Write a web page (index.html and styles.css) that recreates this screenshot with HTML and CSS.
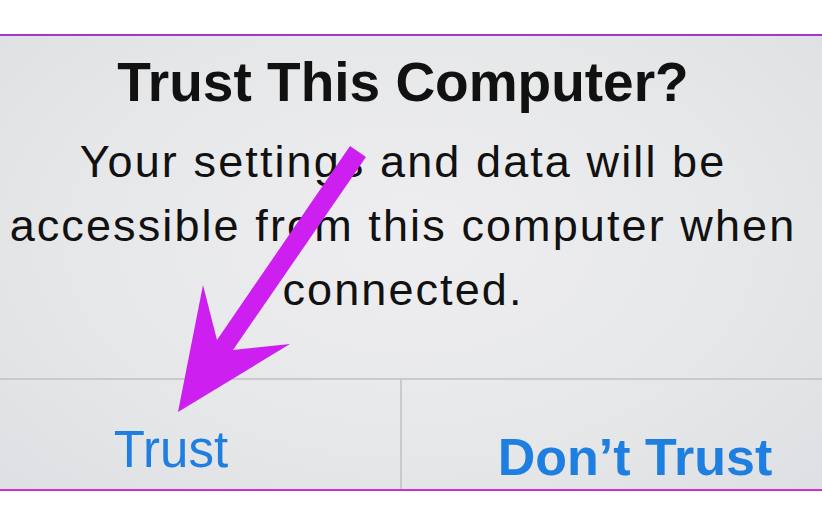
FILE: index.html
```html
<!DOCTYPE html>
<html lang="en">
<head>
<meta charset="utf-8">
<title>Trust This Computer?</title>
<link rel="stylesheet" href="styles.css">
</head>
<body>
<div class="page">
  <div class="alert">
    <div class="content">
      <h1 class="title">Trust This Computer?</h1>
      <p class="message">Your settings and data will be<br>accessible from this computer when<br>connected.</p>
    </div>
    <div class="actions">
      <div class="btn btn-trust">Trust</div>
      <div class="btn btn-dont">Don’t Trust</div>
    </div>
  </div>
  <svg class="arrow" width="822" height="522" viewBox="0 0 822 522" xmlns="http://www.w3.org/2000/svg">
    <polygon points="350,146 366,157 233,350 290,344 178,412 203,285 217,340" fill="#cc1ff0"/>
  </svg>
</div>
</body>
</html>
```

FILE: styles.css
```css
html, body {
  margin: 0;
  padding: 0;
  background: #ffffff;
}

.page {
  position: relative;
  width: 822px;
  height: 522px;
  padding-top: 34px;
  box-sizing: border-box;
  font-family: "Liberation Sans", Arial, sans-serif;
}

.alert {
  height: 457px;
  box-sizing: border-box;
  border-top: 2px solid #a736c8;
  border-bottom: 2px solid #cc2fd2;
  background: radial-gradient(ellipse 70% 80% at 50% 45%, #eeeef0 0%, #e6e7e9 60%, #dedfe2 100%);
  display: flex;
  flex-direction: column;
}

.content {
  padding-top: 14px;
  padding-right: 16px;
  height: 344px;
  box-sizing: border-box;
  border-bottom: 2px solid #c9cacd;
  text-align: center;
  color: #111111;
}

.title {
  margin: 0;
  font-size: 55px;
  line-height: 64px;
  font-weight: bold;
  letter-spacing: 0;
}

.message {
  margin: 16px 0 0;
  font-size: 45px;
  line-height: 64px;
  font-weight: normal;
  letter-spacing: 2.1px;
}

.actions {
  flex: 1;
  display: grid;
  grid-template-columns: 402px 1fr;
}

.btn {
  color: #1f7fe0;
  text-align: center;
  box-sizing: border-box;
}

.btn-trust {
  border-right: 2px solid #c9cacd;
  padding-top: 40px;
  padding-right: 58px;
  font-size: 51px;
  line-height: 60px;
}

.btn-dont {
  padding-top: 47px;
  padding-left: 46px;
  font-size: 52px;
  line-height: 60px;
  font-weight: bold;
}

.arrow {
  position: absolute;
  top: 0;
  left: 0;
}
```
